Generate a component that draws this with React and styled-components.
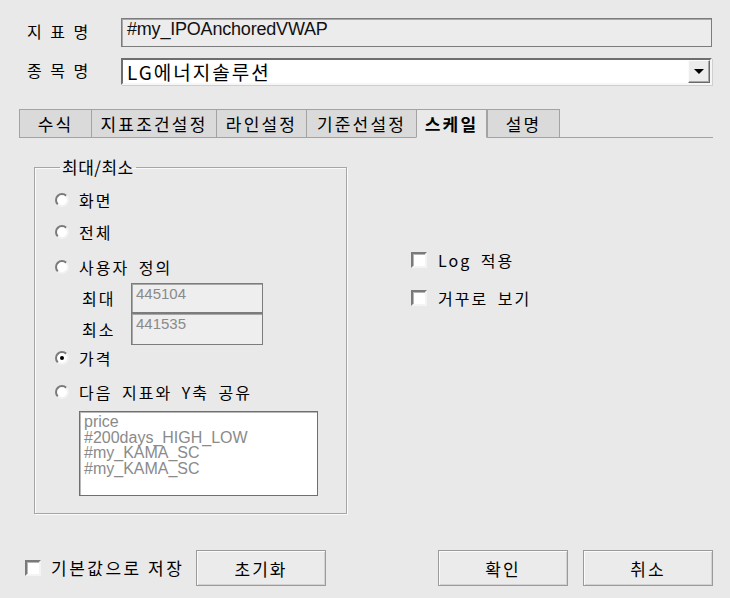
import React from 'react';
import styled, { createGlobalStyle } from 'styled-components';

const GlobalStyle = createGlobalStyle`
  html, body {
    margin: 0;
    padding: 0;
    background: #e9e9e9;
  }
  body {
    font-family: "Noto Sans CJK KR", "Liberation Sans", sans-serif;
    font-weight: 400;
    color: #000;
  }
`;

const Dialog = styled.div`
  width: 730px;
  height: 598px;
  box-sizing: border-box;
  padding: 18px 17px 0 19px;
  display: flex;
  flex-direction: column;
  background: #e9e9e9;
`;

const FieldRow = styled.div`
  display: flex;
  align-items: center;
  height: ${p => p.h}px;
  margin-top: ${p => p.mt || 0}px;
`;

const FieldLabel = styled.div`
  width: 102px;
  box-sizing: border-box;
  padding-left: 8px;
  font-size: 16px;
  letter-spacing: 1px;
  word-spacing: 3px;
  line-height: 20px;
  margin-top: -4px;
`;

const NameBox = styled.div`
  width: 591px;
  height: 29px;
  box-sizing: border-box;
  border: 1px solid #7c7c7c;
  box-shadow: inset 1px 1px 0 #a8a8a8;
  background: #ececec;
  padding: 0 5px;
  font-family: "Liberation Sans", sans-serif;
  font-size: 18px;
  letter-spacing: -0.2px;
  line-height: 20px;
  color: #111;
`;

const Combo = styled.div`
  width: 591px;
  height: 27px;
  box-sizing: border-box;
  display: flex;
  align-items: center;
  background: #fff;
  border: 2px solid;
  border-color: #6e6e6e #f6f6f6 #f6f6f6 #6e6e6e;
  box-shadow: 1px 1px 0 #cfcfcf;
`;

const ComboText = styled.div`
  flex: 1;
  padding-left: 4px;
  font-size: 19px;
  letter-spacing: 2px;
  line-height: 22px;
`;

const ComboButton = styled.div`
  width: 22px;
  height: 23px;
  box-sizing: border-box;
  display: flex;
  align-items: center;
  justify-content: center;
  background: #ececec;
  border: 1px solid;
  border-color: #fbfbfb #6a6a6a #6a6a6a #fbfbfb;
  box-shadow: inset -1px -1px 0 #a8a8a8;
  &::after {
    content: '';
    border-left: 5px solid transparent;
    border-right: 5px solid transparent;
    border-top: 5px solid #000;
  }
`;

const TabStrip = styled.div`
  display: flex;
  margin-top: 24px;
  height: 29px;
`;

const Tab = styled.div`
  width: ${p => p.w}px;
  box-sizing: border-box;
  display: flex;
  align-items: center;
  justify-content: center;
  font-size: 17px;
  letter-spacing: 2.2px;
  line-height: 20px;
  border-top: 1px solid #a3a3a3;
  border-left: 1px solid #a3a3a3;
  border-right: ${p => (p.last || p.active ? '1px solid #a3a3a3' : 'none')};
  border-bottom: ${p => (p.active ? '1px solid transparent' : '1px solid #a3a3a3')};
  background: ${p => (p.active ? '#e9e9e9' : '#dadada')};
  font-weight: ${p => (p.active ? 700 : 400)};
  color: #000;
`;

const TabFill = styled.div`
  flex: 1;
  border-bottom: 1px solid #a3a3a3;
`;

const TabBody = styled.div`
  display: flex;
  align-items: flex-start;
  margin-top: 21px;
  padding-left: 15px;
`;

const Group = styled.fieldset`
  width: 313px;
  height: 355px;
  box-sizing: border-box;
  margin: 0;
  padding: 0 0 0 20px;
  border: 1px solid #a6a6a6;
  box-shadow: 1px 1px 0 #fafafa, inset 1px 1px 0 #fafafa;
  display: flex;
  flex-direction: column;
`;

const Legend = styled.legend`
  margin-left: 5px;
  padding: 0 2px;
  font-size: 17px;
  letter-spacing: 0.5px;
  line-height: 16px;
`;

const OptionRow = styled.div`
  display: flex;
  align-items: center;
  height: 24px;
  margin-top: ${p => p.mt}px;
  font-size: 16px;
  letter-spacing: 2px;
  word-spacing: 4px;
  line-height: 20px;
`;

const Radio = styled.span`
  position: relative;
  width: 14px;
  height: 14px;
  box-sizing: border-box;
  border-radius: 50%;
  background: #fff;
  border: 2px solid;
  border-color: #7a7a7a #f2f2f2 #f2f2f2 #7a7a7a;
  margin-right: 10px;
  flex: none;
  &::after {
    content: '';
    display: ${p => (p.checked ? 'block' : 'none')};
    position: absolute;
    left: 3px;
    top: 3px;
    width: 4px;
    height: 4px;
    border-radius: 50%;
    background: #000;
  }
`;

const RangeRow = styled.div`
  display: flex;
  align-items: center;
  padding-left: 27px;
  height: ${p => p.h}px;
  margin-top: ${p => p.mt}px;
`;

const RangeLabel = styled.span`
  width: 49px;
  font-size: 16px;
  letter-spacing: 2px;
  line-height: 20px;
`;

const RangeInput = styled.div`
  width: 132px;
  height: 100%;
  box-sizing: border-box;
  border: 1px solid #7c7c7c;
  box-shadow: inset 1px 1px 0 #a8a8a8;
  background: #eeeeee;
  padding: 0 4px;
  font-family: "Liberation Sans", sans-serif;
  font-size: 15px;
  line-height: 20px;
  color: #8a8a8a;
`;

const ListBox = styled.div`
  width: 239px;
  height: 85px;
  margin: 7px 0 0 24px;
  box-sizing: border-box;
  background: #fff;
  border: 1px solid #6f6f6f;
  box-shadow: inset 1px 1px 0 #b8b8b8;
  padding: 2px 4px;
  font-family: "Liberation Sans", sans-serif;
  font-size: 16px;
  line-height: 15.5px;
  color: #8a8a8a;
`;

const SideColumn = styled.div`
  display: flex;
  flex-direction: column;
  gap: 14px;
  padding-top: 89px;
  margin-left: 64px;
`;

const CheckRow = styled.div`
  display: flex;
  align-items: center;
  height: 24px;
  font-size: 16px;
  letter-spacing: 2px;
  word-spacing: 4px;
  line-height: 20px;
`;

const Check = styled.span`
  width: 16px;
  height: 16px;
  box-sizing: border-box;
  background: #fff;
  border: 2px solid;
  border-color: #7a7a7a #f4f4f4 #f4f4f4 #7a7a7a;
  box-shadow: inset 1px 1px 0 #b5b5b5;
  margin-right: ${p => p.gap}px;
  flex: none;
`;

const Footer = styled.div`
  display: flex;
  align-items: center;
  margin-top: 36px;
  height: 36px;
`;

const FooterCheck = styled(CheckRow)`
  width: 177px;
  box-sizing: border-box;
  padding-left: 6px;
  font-size: 17px;
  letter-spacing: 2.5px;
  word-spacing: 0;
  white-space: nowrap;
`;

const Button = styled.button`
  width: 130px;
  height: 36px;
  box-sizing: border-box;
  margin: 0 0 0 ${p => p.ml}px;
  padding: 0;
  background: #ebebeb;
  border: 1px solid #9a9a9a;
  box-shadow: inset 1px 1px 0 #fbfbfb, inset -1px -1px 0 #d2d2d2;
  font-family: "Noto Sans CJK KR", sans-serif;
  font-size: 17px;
  letter-spacing: 2px;
  color: #000;
`;

const tabs = [
  { label: '수식', w: 72 },
  { label: '지표조건설정', w: 125 },
  { label: '라인설정', w: 90 },
  { label: '기준선설정', w: 110 },
  { label: '스케일', w: 71, active: true },
  { label: '설명', w: 73 },
];

const shared = ['price', '#200days_HIGH_LOW', '#my_KAMA_SC', '#my_KAMA_SC'];

export default function App() {
  return (
    <>
      <GlobalStyle />
      <Dialog>
        <FieldRow h={29}>
          <FieldLabel>지 표 명</FieldLabel>
          <NameBox>#my_IPOAnchoredVWAP</NameBox>
        </FieldRow>
        <FieldRow h={27} mt={11}>
          <FieldLabel>종 목 명</FieldLabel>
          <Combo>
            <ComboText>LG에너지솔루션</ComboText>
            <ComboButton />
          </Combo>
        </FieldRow>

        <TabStrip>
          {tabs.map((t, i) => (
            <Tab key={t.label} w={t.w} active={t.active} last={i === tabs.length - 1}>
              {t.label}
            </Tab>
          ))}
          <TabFill />
        </TabStrip>

        <TabBody>
          <Group>
            <Legend>최대/최소</Legend>
            <OptionRow mt={13}>
              <Radio />화면
            </OptionRow>
            <OptionRow mt={8}>
              <Radio />전체
            </OptionRow>
            <OptionRow mt={11}>
              <Radio />사용자 정의
            </OptionRow>
            <RangeRow h={30} mt={4}>
              <RangeLabel>최대</RangeLabel>
              <RangeInput>445104</RangeInput>
            </RangeRow>
            <RangeRow h={32} mt={0}>
              <RangeLabel>최소</RangeLabel>
              <RangeInput>441535</RangeInput>
            </RangeRow>
            <OptionRow mt={1}>
              <Radio checked />가격
            </OptionRow>
            <OptionRow mt={10}>
              <Radio />다음 지표와 Y축 공유
            </OptionRow>
            <ListBox>
              {shared.map((s, i) => (
                <div key={i}>{s}</div>
              ))}
            </ListBox>
          </Group>

          <SideColumn>
            <CheckRow>
              <Check gap={11} />Log 적용
            </CheckRow>
            <CheckRow>
              <Check gap={11} />거꾸로 보기
            </CheckRow>
          </SideColumn>
        </TabBody>

        <Footer>
          <FooterCheck>
            <Check gap={10} />기본값으로 저장
          </FooterCheck>
          <Button ml={0}>초기화</Button>
          <Button ml={112}>확인</Button>
          <Button ml={15}>취소</Button>
        </Footer>
      </Dialog>
    </>
  );
}
